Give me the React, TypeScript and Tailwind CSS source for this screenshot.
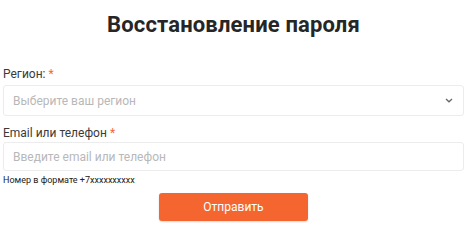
export default function App() {
  return (
    <div className="w-[474px] h-[242px] bg-white font-['Roboto',sans-serif] text-[#222]">
      <div className="ml-[3px] w-[461px] pt-[12px]">
        <h1 className="text-center text-[22px] leading-[26px] font-bold text-[#262626] tracking-[0.15px]">
          Восстановление пароля
        </h1>

        <form className="mt-[28px]" onSubmit={(e) => e.preventDefault()}>
          <label className="block text-[12px] leading-[16px] text-[#3a3a3a]">
            Регион: <span className="text-[#f26a3a]">*</span>
          </label>
          <div className="mt-[3px] h-[31px] flex items-center justify-between border border-[#ececec] rounded-[3px] pl-[9px] pr-[10px]">
            <span className="text-[12px] text-[#b8b8b8]">Выберите ваш регион</span>
            <svg width="8" height="5" viewBox="0 0 8 5" fill="none">
              <path d="M1 1l3 2.8L7 1" stroke="#666" strokeWidth="1.3" />
            </svg>
          </div>

          <label className="block mt-[9px] text-[12px] leading-[16px] text-[#3a3a3a]">
            Email или телефон <span className="text-[#f26a3a]">*</span>
          </label>
          <div className="mt-[1px] h-[29px] flex items-center border border-[#ececec] rounded-[3px] pl-[9px]">
            <input
              className="w-full outline-none text-[12px] placeholder:text-[#b8b8b8]"
              placeholder="Введите email или телефон"
            />
          </div>
          <p className="mt-[3px] text-[9px] leading-[12px] text-[#222]">Номер в формате +7xxxxxxxxxx</p>

          <div className="flex justify-center mt-[7px]">
            <button className="w-[149px] h-[28px] rounded-[3px] bg-[#f5652f] text-white text-[12px] shadow-[0_1px_2px_rgba(0,0,0,0.15)]">
              Отправить
            </button>
          </div>
        </form>
      </div>
    </div>
  );
}
